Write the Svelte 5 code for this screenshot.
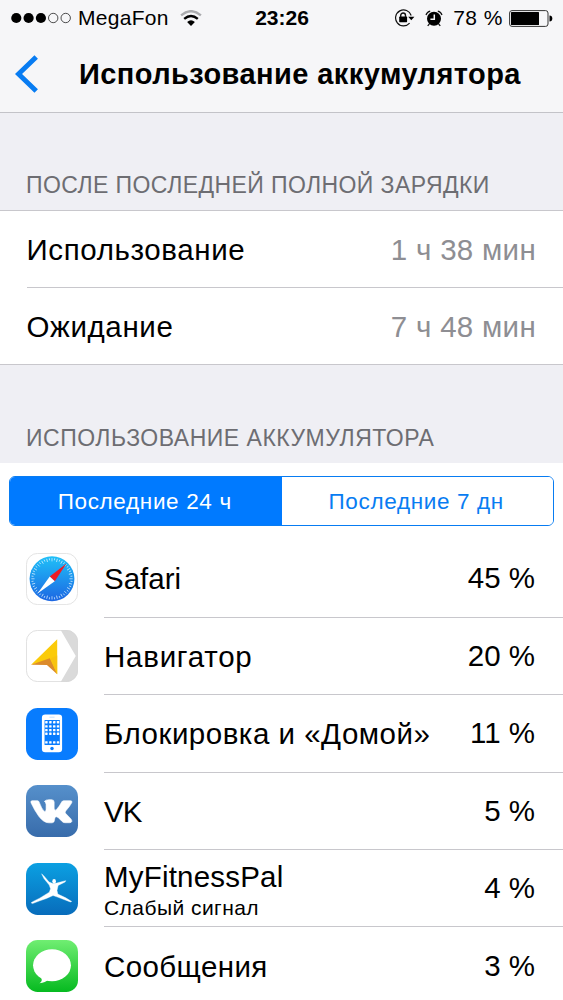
<script lang="ts">
	type AppId = 'safari' | 'navigator' | 'home' | 'vk' | 'mfp' | 'messages'

	interface AppUsage {
		id: AppId
		name: string
		percent: number
		note?: string
	}

	const times = [
		{ id: 'usage', label: 'Использование', value: '1 ч 38 мин' },
		{ id: 'standby', label: 'Ожидание', value: '7 ч 48 мин' }
	]

	const apps: AppUsage[] = [
		{ id: 'safari', name: 'Safari', percent: 45 },
		{ id: 'navigator', name: 'Навигатор', percent: 20 },
		{ id: 'home', name: 'Блокировка и «Домой»', percent: 11 },
		{ id: 'vk', name: 'VK', percent: 5 },
		{ id: 'mfp', name: 'MyFitnessPal', percent: 4, note: 'Слабый сигнал' },
		{ id: 'messages', name: 'Сообщения', percent: 3 }
	]

	const ticks = Array.from({ length: 48 }, (_, i) => i * 7.5)
	const dotRows = [14, 18, 21.7, 25.3, 33.7]
	const dotCols = [20, 23.9, 27.7, 31.4]

	let range: 'day' | 'week' = $state('day')
</script>

<div class="screen">
	<header>
		<div class="status">
			<div class="carrier">
				<svg class="signal" width="61" height="12" viewBox="0 0 61 12">
					<circle cx="5.3" cy="6" r="5.1" />
					<circle cx="17.6" cy="6" r="5.1" />
					<circle cx="29.9" cy="6" r="5.1" />
					<circle class="empty" cx="42.2" cy="6" r="4.7" />
					<circle class="empty" cx="54.7" cy="6" r="4.7" />
				</svg>
				<span class="operator">MegaFon</span>
				<svg class="wifi" width="22" height="17" viewBox="0 0 22 17">
					<path d="M1.1 5.4Q11 -3 20.9 5.4" stroke="#aaabae" />
					<path d="M4.2 8.8Q11 3 17.8 8.8" stroke="#000" />
					<path class="fan" d="M7.1 12Q11 8.4 14.9 12L11 16Z" />
				</svg>
			</div>
			<span class="clock">23:26</span>
			<div class="indicators">
				<svg class="lock" width="21" height="18" viewBox="0 0 21 18">
					<path class="ring" d="M17.2 6.5A8 8 0 1 0 15.6 14.2" />
					<path d="M14.2 7.7h6.2l-3.1 3.6z" />
					<rect x="5.2" y="7.6" width="7.9" height="5.6" rx=".6" />
					<path class="ring shackle" d="M6.7 8V6.4a2.4 2.4 0 0 1 4.8 0V8" />
				</svg>
				<svg class="alarm" width="18" height="17" viewBox="0 0 18 17">
					<circle cx="9" cy="8.8" r="7" />
					<path class="ring" d="M1 5Q2 1.9 5.2 1.2M17 5Q16 1.9 12.8 1.2M4.4 14l-1.7 1.9M13.6 14l1.7 1.9" />
					<path class="hands" d="M9.3 4.5V9.3H5.4" />
				</svg>
				<span class="charge">78 %</span>
				<svg class="battery" width="44" height="17" viewBox="0 0 44 17">
					<rect class="case" x=".6" y=".6" width="38.4" height="15.8" rx="2.4" />
					<rect x="2" y="2.1" width="28" height="12.8" rx=".5" />
					<path d="M40.5 5.5Q43.3 5.7 43.3 8.5T40.5 11.5Z" />
				</svg>
			</div>
		</div>
		<div class="nav">
			<button class="back" aria-label="Назад">
				<svg width="24" height="38" viewBox="0 0 24 38">
					<path d="M21.2 2L3.5 19L21.2 36" />
				</svg>
			</button>
			<h1>Использование аккумулятора</h1>
		</div>
	</header>

	<h2 class="first">После последней полной зарядки</h2>
	<div class="times">
		{#each times as row (row.id)}
			<div class="time-row">
				<span class="label">{row.label}</span>
				<span class="value">{row.value}</span>
			</div>
		{/each}
	</div>

	<h2 class="second">Использование аккумулятора</h2>
	<div class="usage-list">
		<div class="segmented">
			<button class:active={range === 'day'} onclick={() => range = 'day'}>Последние 24 ч</button>
			<button class:active={range === 'week'} onclick={() => range = 'week'}>Последние 7 дн</button>
		</div>

		{#each apps as app (app.id)}
			<div class="app-row">
				<svg class="icon" width="52" height="52" viewBox="0 0 51 51">
					{#if app.id === 'safari'}
						<defs>
							<linearGradient id="safari-bg" x2="0" y2="1">
								<stop offset="0" stop-color="#20c0f8" />
								<stop offset="1" stop-color="#1c66e2" />
							</linearGradient>
						</defs>
						<rect x=".4" y=".4" width="50.2" height="50.2" rx="11" fill="#fff" stroke="#dcdcdc" stroke-width=".8" />
						<circle cx="25.5" cy="25.3" r="22" fill="url(#safari-bg)" />
						{#each ticks as angle, i}
							<path
								d={i % 2 ? 'M25.5 5v2' : 'M25.5 5v3.2'}
								stroke="#d9f0ff"
								stroke-width=".7"
								transform="rotate({angle} 25.5 25.3)"
							/>
						{/each}
						<path d="M39.7 10.2L28.2 27.8L23.3 23Z" fill="#ee1c25" />
						<path d="M11.3 39.8L23.3 23L28.2 27.8Z" fill="#fff" />
					{:else if app.id === 'navigator'}
						<defs>
							<clipPath id="nav-clip"><rect width="51" height="51" rx="11.5" /></clipPath>
						</defs>
						<g clip-path="url(#nav-clip)">
							<rect width="51" height="51" fill="#fff" />
							<path d="M34 0H51V51H34L48.8 25.5Z" fill="#dadada" />
						</g>
						<rect x=".4" y=".4" width="50.2" height="50.2" rx="11" fill="none" stroke="#d8d8d8" stroke-width=".8" />
						<path d="M30.6 9L5 34L21 30.5L30.6 43.5Z" fill="#fbcb09" />
						<path d="M5 34L23.3 27.8L30.6 43.5L20.5 34.4Z" fill="#dc8b2b" />
						<path d="M24 28L30.6 25V43.5Z" fill="#f8c30e" />
					{:else if app.id === 'home'}
						<rect width="51" height="51" rx="11.5" fill="#087cfe" />
						<rect x="15.6" y="6.4" width="19.8" height="37" rx="3.2" fill="#fff" />
						<rect x="18.2" y="11.8" width="15" height="24.5" fill="#087cfe" />
						{#each dotRows as y}
							{#each dotCols as x}
								<rect x={x - 1.2} y={y - 1.2} width="2.4" height="2.4" rx=".4" fill="#fff" />
							{/each}
						{/each}
						<circle cx="25.5" cy="39.8" r="1.7" fill="#087cfe" />
						<path d="M23 9h5" stroke="#b9d9fb" stroke-width=".8" />
					{:else if app.id === 'vk'}
						<defs>
							<linearGradient id="vk-bg" x2="0" y2="1">
								<stop offset="0" stop-color="#5690cb" />
								<stop offset="1" stop-color="#386cab" />
							</linearGradient>
						</defs>
						<rect width="51" height="51" rx="11.5" fill="url(#vk-bg)" />
						<path
							d="M6 15.4H11.3Q12.4 15.4 12.9 16.8Q15.5 23.5 17.7 25.7Q19.6 27 19.7 23.8V19.2Q19.6 16.8 18 16.1Q19.2 14.4 22.4 14.4H25.2Q27.6 14.5 27.6 16.7V22.8Q28 25.8 29.7 24.3Q32.8 21 35.1 16.5Q35.7 15.4 37 15.4H43.2Q46 15.4 44.7 17.7Q42.9 21.1 38.9 25.5Q37.8 26.8 39 28L44.1 33.3Q46.4 36.6 42.7 37H38.2Q36.5 37 35.1 35.5L31.7 32Q28.2 29.6 28 34Q28 36.8 25.7 37.1H22.5Q17.5 37.2 12.5 30.6Q8.2 24.6 4.9 17.4Q4.2 15.6 6 15.4Z"
							fill="#fff"
							stroke="#fff"
							stroke-width=".6"
						/>
					{:else if app.id === 'mfp'}
						<defs>
							<linearGradient id="mfp-bg" x2="0" y2="1">
								<stop offset="0" stop-color="#0ba0e2" />
								<stop offset="1" stop-color="#086cbb" />
							</linearGradient>
						</defs>
						<rect width="51" height="51" rx="11.5" fill="url(#mfp-bg)" />
						<ellipse cx="27.6" cy="18" rx="1.8" ry="2.2" fill="#fff" />
						<path
							d="M15.3 10.6L17.6 12.7L22.6 18.7L26.3 20.2L30.2 19.7L34.8 18.4L39 17.3L38.3 18.6L31.5 22L30.4 27L31.2 30.5L39 34.2L44.8 37.7L43.5 38.2L38.5 36.3L30.3 33.2L26.5 31.9L20 34.8L13.5 37.1L6.4 39.8L5 39.1L7 37.7L13.4 34.5L22.9 28.6L24.1 25.2L22.8 21.6L17.6 15.3Z"
							fill="#fff"
							stroke="#fff"
							stroke-width=".4"
						/>
					{:else}
						<defs>
							<linearGradient id="msg-bg" x2="0" y2="1">
								<stop offset="0" stop-color="#70ee72" />
								<stop offset="1" stop-color="#06ba20" />
							</linearGradient>
						</defs>
						<rect width="51" height="51" rx="11.5" fill="url(#msg-bg)" />
						<ellipse cx="25.5" cy="24.8" rx="18.6" ry="15.7" fill="#fff" />
						<path d="M14.5 36Q17 40 13.2 42.3Q19 42.1 22.5 38.5Z" fill="#fff" />
					{/if}
				</svg>
				<div class="app-body">
					<div class="app-text" class:noted={app.note}>
						<span class="name {app.id}">{app.name}</span>
						{#if app.note}
							<span class="note">{app.note}</span>
						{/if}
					</div>
					<span class="percent">{app.percent} %</span>
				</div>
			</div>
		{/each}
	</div>
</div>

<style>
	:global(body) {
		margin: 0;
		background: #efeff4;
	}

	.screen {
		width: 563px;
		height: 1000px;
		overflow: hidden;
		background: #efeff4;
		color: #000;
		font-family: "Liberation Sans", Arial, sans-serif;
		white-space: nowrap;
	}

	header {
		height: 112px;
		background: #f6f6f8;
		border-bottom: 1.5px solid #c3c3c8;
	}

	.status {
		display: grid;
		grid-template-columns: 1fr auto 1fr;
		align-items: center;
		height: 36px;
		padding: 0 10px 0 11px;
		font-size: 21px;
	}

	.carrier,
	.indicators {
		display: flex;
		align-items: center;
	}

	.indicators {
		justify-content: flex-end;
	}

	.empty {
		fill: none;
		stroke: #222;
		stroke-width: 0.8;
	}

	.operator {
		margin-left: 6px;
		letter-spacing: 0.3px;
	}

	.wifi {
		margin-left: 11px;
		fill: none;
		stroke-width: 2.4;
	}

	.wifi .fan {
		fill: #000;
	}

	.clock {
		font-weight: 700;
	}

	.ring {
		fill: none;
		stroke: #111;
		stroke-width: 1.2;
	}

	.shackle {
		stroke-width: 1.4;
	}

	.alarm {
		margin-left: 10px;
	}

	.hands {
		fill: none;
		stroke: #f6f6f8;
		stroke-width: 1.5;
	}

	.charge {
		margin-left: 10px;
		letter-spacing: 0.5px;
	}

	.battery {
		margin-left: 6px;
	}

	.case {
		fill: none;
		stroke: #333;
		stroke-width: 1;
	}

	.nav {
		display: flex;
		align-items: center;
		height: 76px;
		padding-left: 15px;
	}

	.back {
		display: flex;
		padding: 0;
		border: 0;
		background: none;
	}

	.back path {
		fill: none;
		stroke: #087cf2;
		stroke-width: 5;
	}

	h1 {
		margin: 0 0 0 40px;
		font-size: 29px;
		font-weight: 700;
		letter-spacing: 0.43px;
		line-height: 40px;
	}

	h2 {
		box-sizing: border-box;
		margin: 0;
		padding-left: 26px;
		color: #6d6d72;
		font-size: 23px;
		font-weight: 400;
		letter-spacing: 0.42px;
		line-height: 28px;
		text-transform: uppercase;
	}

	.first {
		height: 97px;
		padding-top: 58px;
	}

	.second {
		height: 98px;
		padding-top: 59px;
		letter-spacing: 0.5px;
	}

	.times {
		background: #fff;
		border-top: 1px solid #c8c7cc;
		border-bottom: 1px solid #c8c7cc;
	}

	.time-row {
		display: flex;
		box-sizing: border-box;
		align-items: center;
		justify-content: space-between;
		height: 77px;
		margin-left: 26.5px;
		padding: 2px 27px 0 0;
		font-size: 29.5px;
	}

	.time-row + .time-row {
		height: 76px;
	}

	.time-row:first-child {
		border-bottom: 1px solid #c8c7cc;
	}

	.label {
		letter-spacing: 0.62px;
	}

	.value {
		color: #8e8e93;
		letter-spacing: 0.3px;
	}

	.usage-list {
		background: #fff;
		padding-top: 13px;
	}

	.segmented {
		display: grid;
		box-sizing: border-box;
		grid-template-columns: 1fr 1fr;
		height: 50px;
		margin: 0 9px 14.2px;
		overflow: hidden;
		border: 1.5px solid #087cf2;
		border-radius: 6px;
	}

	.segmented button {
		padding: 2px 2px 0 0;
		border: 0;
		background: #fff;
		color: #087cf2;
		font: inherit;
		font-size: 22.5px;
		letter-spacing: 0.65px;
	}

	.segmented .active {
		background: #007aff;
		color: #fff;
	}

	.app-row {
		display: flex;
		align-items: center;
		height: 77.45px;
		padding-left: 26px;
	}

	.icon {
		flex: none;
	}

	.app-body {
		display: flex;
		box-sizing: border-box;
		flex: 1;
		align-items: center;
		justify-content: space-between;
		height: 100%;
		margin-left: 26px;
		padding-right: 28px;
		border-bottom: 1px solid #c8c7cc;
		font-size: 29.5px;
	}

	.app-text {
		display: flex;
		flex-direction: column;
		padding-top: 2px;
	}

	/* Helvetica Neue runs wider than Liberation in Cyrillic, tighter in "VK" */
	.name {
		letter-spacing: 0.5px;
	}

	.name.safari {
		letter-spacing: 0;
	}

	.name.navigator {
		letter-spacing: 0.75px;
	}

	.name.vk {
		letter-spacing: -1px;
	}

	.name.mfp {
		letter-spacing: 0.2px;
	}

	.name.messages {
		letter-spacing: 0.4px;
	}

	.note {
		font-size: 21px;
		letter-spacing: 0.45px;
		line-height: 25px;
	}

	.noted .name {
		line-height: 36px;
	}
</style>
